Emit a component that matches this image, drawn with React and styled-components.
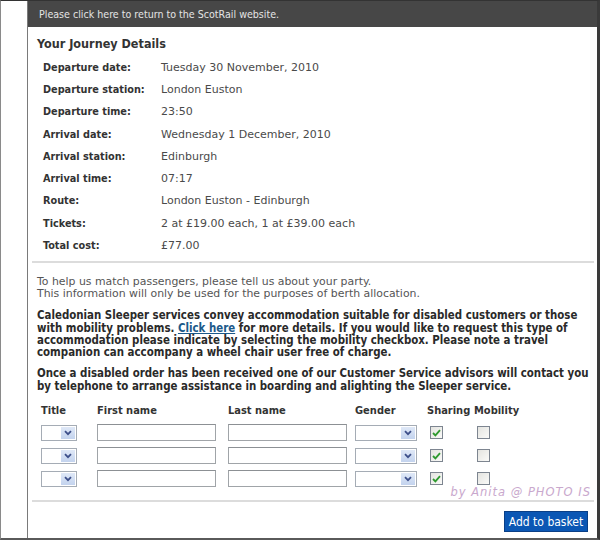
import styled, { createGlobalStyle } from "styled-components";

const GlobalStyle = createGlobalStyle`
  html, body {
    margin: 0;
    padding: 0;
    background: #fff;
  }
  body {
    font-family: "DejaVu Sans", sans-serif;
    font-size: 11px;
    color: #333;
  }
`;

const Frame = styled.div`
  width: 600px;
  height: 540px;
  box-sizing: border-box;
  border-top: 1px solid #333;
  border-left: 1px solid #8a8a8a;
  border-right: 3px solid #3a3a3a;
  border-bottom: 2px solid #5a5a5a;
  padding-left: 26px;
  display: flex;
`;

const Panel = styled.div`
  flex: 1;
  border-left: 1px solid #7a7a7a;
  display: flex;
  flex-direction: column;
  position: relative;
`;

const TopBar = styled.div`
  height: 26px;
  background: #474747;
  color: #e4e4e4;
  padding-left: 11px;
  display: flex;
  align-items: center;
  font-family: "DejaVu Sans Condensed", "DejaVu Sans", sans-serif;
  font-size: 10.6px;
  cursor: pointer;
`;

const Heading = styled.h2`
  margin: 10px 0 0 9px;
  font-family: "DejaVu Sans Condensed", "DejaVu Sans", sans-serif;
  font-size: 12.5px;
  font-weight: bold;
  color: #333;
  line-height: 14px;
`;

const Details = styled.div`
  display: grid;
  grid-template-columns: 118px auto;
  grid-auto-rows: 22.3px;
  align-items: center;
  margin: 5px 0 0 15px;
`;

const Label = styled.div`
  font-family: "DejaVu Sans Condensed", "DejaVu Sans", sans-serif;
  font-size: 10.8px;
  font-weight: bold;
  color: #333;
`;

const Value = styled.div`
  color: #4a4a4a;
`;

const Rule = styled.hr`
  border: none;
  height: 2px;
  background: #dcdcdc;
  margin: ${(p) => p.$margin || "0"};
`;

const Para = styled.p`
  margin: ${(p) => p.$margin || "0"};
  padding: 0 8px 0 9px;
  line-height: 12.3px;
  font-family: ${(p) =>
    p.$bold ? '"DejaVu Sans Condensed", "DejaVu Sans", sans-serif' : '"DejaVu Sans", sans-serif'};
  font-size: ${(p) => (p.$bold ? "11.4px" : "10.9px")};
  font-weight: ${(p) => (p.$bold ? "bold" : "normal")};
  color: ${(p) => (p.$bold ? "#2a2a2a" : "#555")};
`;

const Link = styled.a`
  color: #1c5a8a;
  text-decoration: underline;
  cursor: pointer;
`;

const Party = styled.div`
  display: grid;
  grid-template-columns: 56px 131px 127px 72px 47px auto;
  grid-template-rows: 18px;
  grid-auto-rows: 23px;
  align-items: center;
  margin: 11px 0 0 13px;
  font-family: "DejaVu Sans Condensed", "DejaVu Sans", sans-serif;
`;

const ColHead = styled.div`
  align-self: start;
  line-height: 16px;
  font-weight: bold;
  font-size: 11px;
  color: #333;
`;

const SelectBox = styled.div`
  width: ${(p) => p.$width}px;
  height: 16px;
  box-sizing: border-box;
  border: 1px solid #a5acb5;
  background: #fff;
  display: flex;
  justify-content: flex-end;
  padding: 1px;
`;

const SelectArrow = styled.span`
  width: 14px;
  background: linear-gradient(#dfe8f7, #c3d3ee);
  display: flex;
  align-items: center;
  justify-content: center;
`;

const TextInput = styled.input`
  width: 119px;
  height: 17px;
  box-sizing: border-box;
  border: 1px solid #a0a4a8;
  border-top-color: #8c9094;
  padding: 0 3px;
  font: inherit;
  outline: none;
`;

const CheckBox = styled.span`
  width: 13px;
  height: 13px;
  box-sizing: border-box;
  margin-left: 3px;
  border: 1px solid #7d8590;
  background: linear-gradient(135deg, #e4e4e0, #fafaf8);
  display: flex;
  align-items: center;
  justify-content: center;
`;

const Footer = styled.div`
  display: flex;
  justify-content: flex-end;
  padding: 9px 9px 0 0;
`;

const Button = styled.button`
  width: 84px;
  height: 21px;
  background: #0b57b4;
  border: 1px solid #0a3f86;
  color: #fff;
  font-family: "DejaVu Sans Condensed", "DejaVu Sans", sans-serif;
  font-size: 12px;
  padding: 0;
  cursor: pointer;
`;

const Watermark = styled.div`
  position: absolute;
  right: 6px;
  top: 484px;
  font-family: "DejaVu Sans", sans-serif;
  font-style: italic;
  font-size: 11.5px;
  letter-spacing: 1px;
  color: #c9a8cd;
`;

const Chevron = () => (
  <svg width="8" height="6" viewBox="0 0 8 6">
    <path d="M1 1.2 L4 4.2 L7 1.2" fill="none" stroke="#3d4f8a" strokeWidth="1.8" />
  </svg>
);

const Tick = () => (
  <svg width="9" height="8" viewBox="0 0 9 8">
    <path d="M1 4 L3.4 6.4 L8 1.2" fill="none" stroke="#2f9a2f" strokeWidth="1.8" />
  </svg>
);

const Select = ({ width }) => (
  <SelectBox $width={width}>
    <SelectArrow>
      <Chevron />
    </SelectArrow>
  </SelectBox>
);

const journey = [
  ["Departure date:", "Tuesday 30 November, 2010"],
  ["Departure station:", "London Euston"],
  ["Departure time:", "23:50"],
  ["Arrival date:", "Wednesday 1 December, 2010"],
  ["Arrival station:", "Edinburgh"],
  ["Arrival time:", "07:17"],
  ["Route:", "London Euston - Edinburgh"],
  ["Tickets:", "2 at £19.00 each, 1 at £39.00 each"],
  ["Total cost:", "£77.00"],
];

const App = () => {
  return (
    <>
      <GlobalStyle />
      <Frame>
        <Panel>
          <TopBar>Please click here to return to the ScotRail website.</TopBar>
          <Heading>Your Journey Details</Heading>
          <Details>
            {journey.map(([label, value]) => [
              <Label key={label}>{label}</Label>,
              <Value key={label + "v"}>{value}</Value>,
            ])}
          </Details>
          <Rule $margin="4px 3px 0 4px" />
          <Para $margin="13px 0 0 0">
            To help us match passengers, please tell us about your party.
            <br />
            This information will only be used for the purposes of berth allocation.
          </Para>
          <Para $bold $margin="9px 0 0 0">
            Caledonian Sleeper services convey accommodation suitable for disabled customers or those
            with mobility problems. <Link>Click here</Link> for more details. If you would like to
            request this type of accommodation please indicate by selecting the mobility checkbox.
            Please note a travel companion can accompany a wheel chair user free of charge.
          </Para>
          <Para $bold $margin="9px 0 0 0">
            Once a disabled order has been received one of our Customer Service advisors will contact
            you by telephone to arrange assistance in boarding and alighting the Sleeper service.
          </Para>
          <Party>
            <ColHead>Title</ColHead>
            <ColHead>First name</ColHead>
            <ColHead>Last name</ColHead>
            <ColHead>Gender</ColHead>
            <ColHead>Sharing</ColHead>
            <ColHead>Mobility</ColHead>
            {[0, 1, 2].map((i) => [
              <Select key={"t" + i} width={36} />,
              <TextInput key={"f" + i} />,
              <TextInput key={"l" + i} />,
              <Select key={"g" + i} width={62} />,
              <CheckBox key={"s" + i}>
                <Tick />
              </CheckBox>,
              <CheckBox key={"m" + i} />,
            ])}
          </Party>
          <Watermark>by Anita @ PHOTO IS</Watermark>
          <Rule $margin="10px 3px 0 4px" />
          <Footer>
            <Button>Add to basket</Button>
          </Footer>
        </Panel>
      </Frame>
    </>
  );
};

export default App;
